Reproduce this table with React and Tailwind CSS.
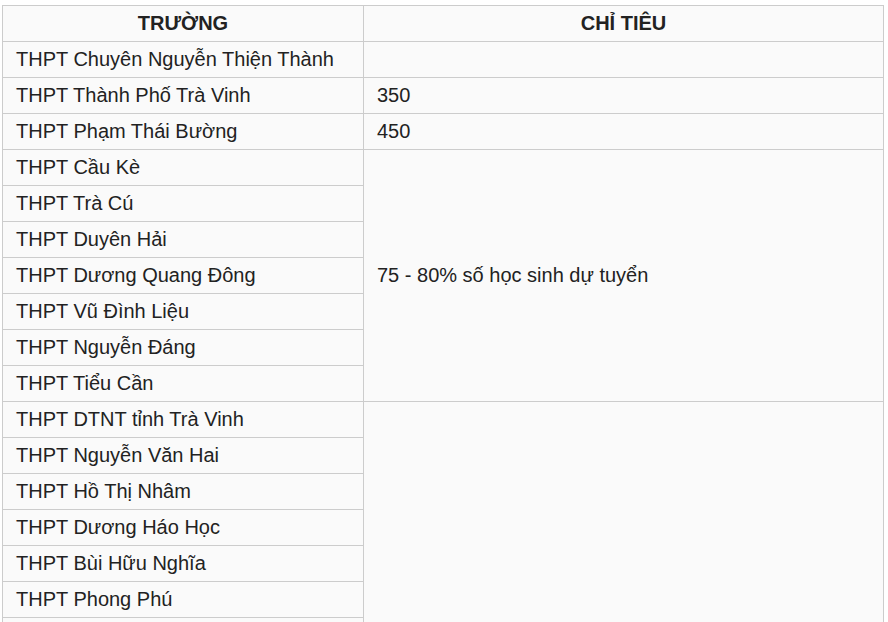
import React from "react";

const groupA = [
  "THPT Cầu Kè",
  "THPT Trà Cú",
  "THPT Duyên Hải",
  "THPT Dương Quang Đông",
  "THPT Vũ Đình Liệu",
  "THPT Nguyễn Đáng",
  "THPT Tiểu Cần",
];
const groupB = [
  "THPT DTNT tỉnh Trà Vinh",
  "THPT Nguyễn Văn Hai",
  "THPT Hồ Thị Nhâm",
  "THPT Dương Háo Học",
  "THPT Bùi Hữu Nghĩa",
  "THPT Phong Phú",
  "",
];

const td = "border border-[#cccccc] h-[36px] px-[13px] pt-0 pb-[2px] align-middle text-left";
const th = "border border-[#cccccc] h-[36px] pt-0 pb-[2px] text-center font-bold text-[20px]";

export default function App() {
  return (
    <div className="h-[622px] w-[888px] overflow-hidden bg-white pt-[5px] pl-[2px]" style={{ fontFamily: '"Liberation Sans", Arial, sans-serif' }}>
      <table className="border-collapse w-[881px] table-fixed text-[20px] text-[#222222] bg-[#fafafa]">
        <colgroup>
          <col className="w-[361px]" />
          <col className="w-[520px]" />
        </colgroup>
        <thead>
          <tr>
            <th className={th}>TRƯỜNG</th>
            <th className={th}>CHỈ TIÊU</th>
          </tr>
        </thead>
        <tbody>
          <tr>
            <td className={td}>THPT Chuyên Nguyễn Thiện Thành</td>
            <td className={td}></td>
          </tr>
          <tr>
            <td className={td}>THPT Thành Phố Trà Vinh</td>
            <td className={td}>350</td>
          </tr>
          <tr>
            <td className={td}>THPT Phạm Thái Bường</td>
            <td className={td}>450</td>
          </tr>
          {groupA.map((n, i) => (
            <tr key={"a" + i}>
              <td className={td}>{n}</td>
              {i === 0 && (
                <td className={td} rowSpan={groupA.length}>
                  75 - 80% số học sinh dự tuyển
                </td>
              )}
            </tr>
          ))}
          {groupB.map((n, i) => (
            <tr key={"b" + i}>
              <td className={td}>{n}</td>
              {i === 0 && <td className={td} rowSpan={groupB.length}></td>}
            </tr>
          ))}
        </tbody>
      </table>
    </div>
  );
}
